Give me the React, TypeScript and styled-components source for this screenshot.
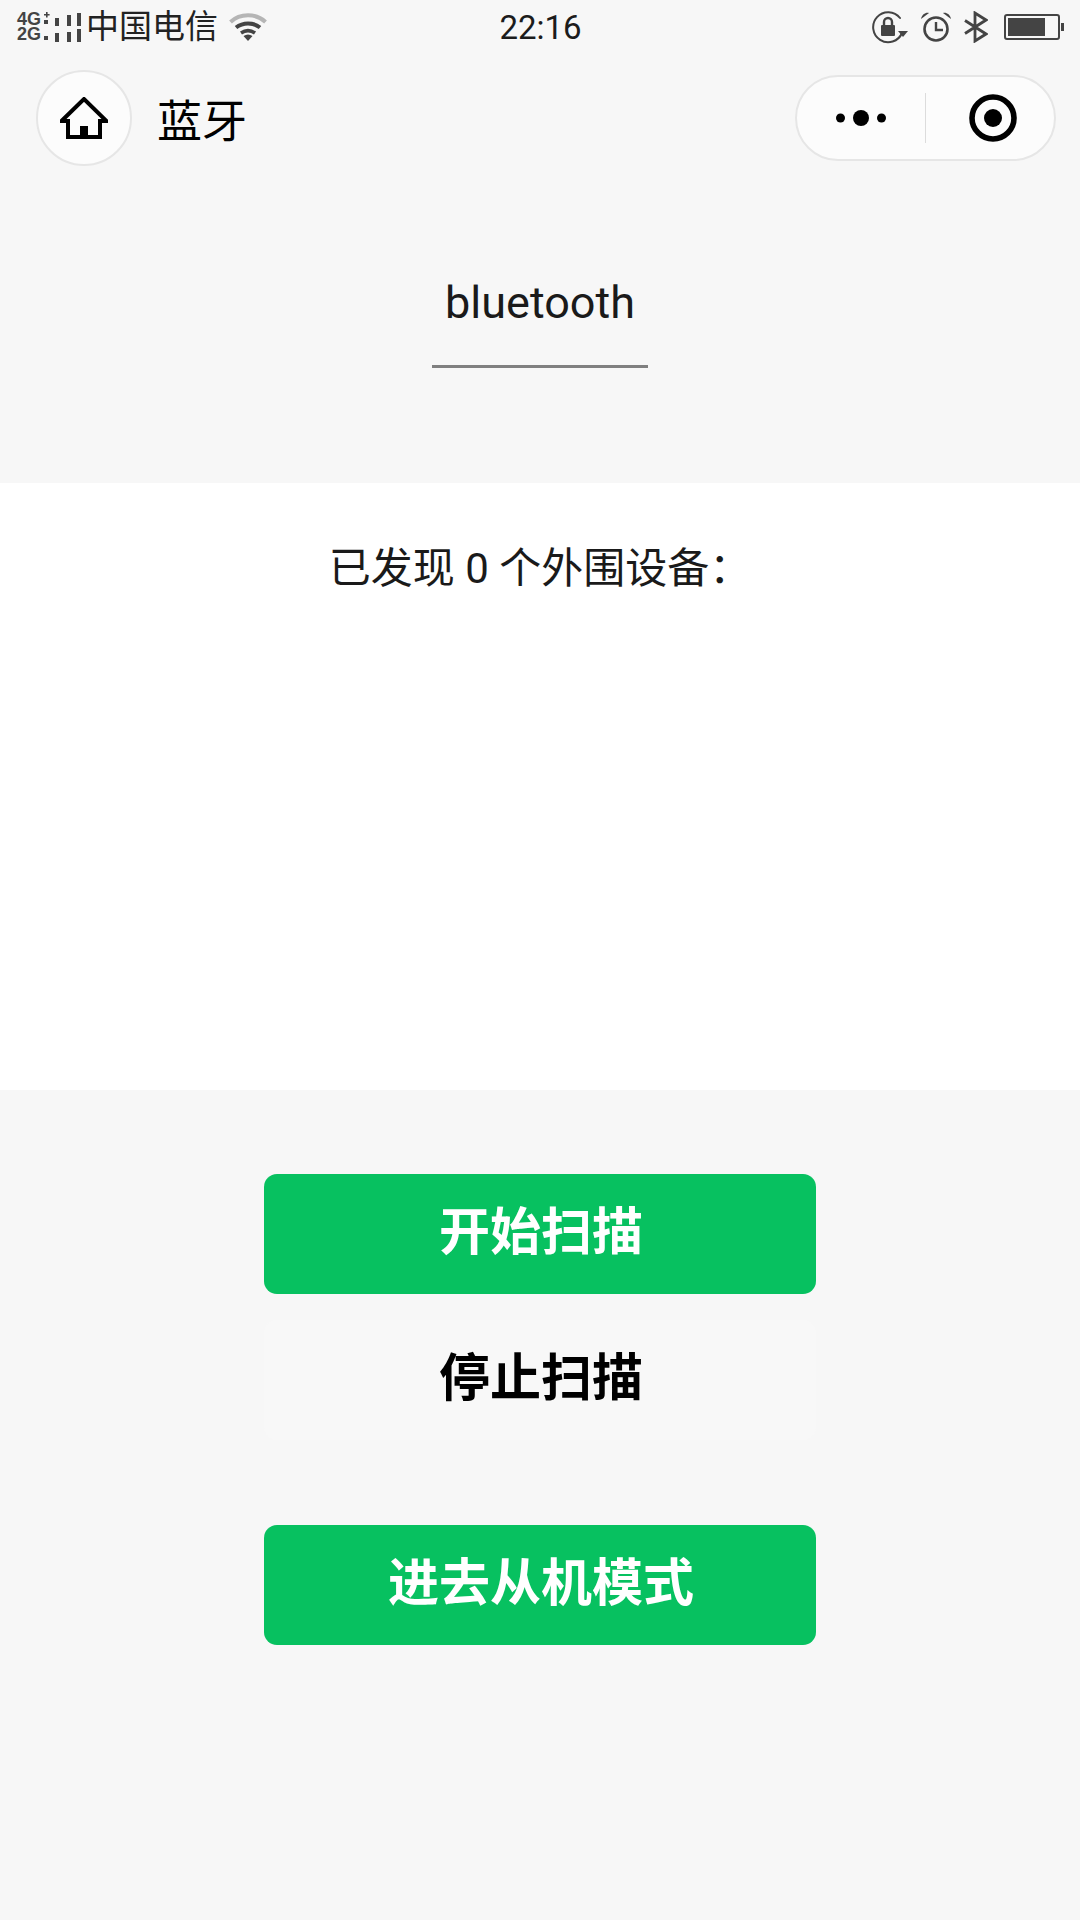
import React from 'react';
import styled, { createGlobalStyle } from 'styled-components';

const GlobalStyle = createGlobalStyle`
  html, body {
    margin: 0;
    padding: 0;
    background: #f7f7f7;
  }
  * {
    box-sizing: border-box;
  }
`;

const FONT = `Roboto, "Noto Sans CJK SC", sans-serif`;

const Page = styled.div`
  width: 1080px;
  height: 1920px;
  display: flex;
  flex-direction: column;
  background: #f7f7f7;
  color: #1a1a1a;
  font-family: ${FONT};
  overflow: hidden;
`;

const StatusBar = styled.div`
  height: 54px;
  padding: 0 16px 0 17px;
  display: grid;
  grid-template-columns: 1fr auto 1fr;
  align-items: center;
  color: #333;
`;

const StatusLeft = styled.div`
  display: flex;
  align-items: center;
`;

const StatusRight = styled.div`
  display: flex;
  align-items: center;
  justify-content: flex-end;
`;

const Space = styled.span<{ $w: number }>`
  width: ${(p) => p.$w}px;
  flex: none;
`;

const NetLabel = styled.div`
  font: 700 18px/15px "Liberation Sans", sans-serif;
  width: 27px;
  color: #444;
`;

const Carrier = styled.span`
  font-size: 33px;
  line-height: 40px;
  color: #222;
`;

const Clock = styled.span`
  font-size: 33px;
  color: #1c1c1c;
`;

const NavBar = styled.div`
  height: 96px;
  margin-top: 16px;
  padding: 0 24px 0 36px;
  display: flex;
  align-items: center;
`;

const HomeButton = styled.div`
  width: 96px;
  height: 96px;
  border-radius: 50%;
  border: 2px solid #e6e6e6;
  background: #fcfcfc;
  display: flex;
  align-items: center;
  justify-content: center;
`;

const NavTitle = styled.span`
  margin-left: 25px;
  font-size: 45px;
  color: #000;
  flex: 1;
`;

const Capsule = styled.div`
  width: 261px;
  height: 86px;
  border-radius: 43px;
  border: 2px solid #e6e6e6;
  background: #fcfcfc;
  display: flex;
  align-items: center;
`;

const CapsulePart = styled.div<{ $inset?: number }>`
  width: 128px;
  flex: none;
  height: 100%;
  padding-left: ${(p) => p.$inset || 0}px;
  display: flex;
  align-items: center;
  justify-content: center;
`;

const CapsuleDivider = styled.div`
  width: 1px;
  height: 50px;
  background: #dcdcdc;
`;

const Header = styled.div`
  height: 317px;
  display: flex;
  flex-direction: column;
  align-items: center;
  padding-top: 101px;
`;

const Title = styled.div`
  font-size: 45px;
  line-height: 72px;
  color: #1a1a1a;
`;

const TitleLine = styled.div`
  width: 216px;
  height: 3px;
  margin-top: 26px;
  background: #808080;
`;

const DeviceSection = styled.div`
  height: 607px;
  background: #fff;
  padding-top: 58px;
  text-align: center;
  font-size: 42px;
  line-height: 56px;
  color: #1a1a1a;
`;

const Actions = styled.div`
  display: flex;
  flex-direction: column;
  align-items: center;
  padding-top: 84px;
`;

const ActionButton = styled.div<{ $primary?: boolean; $gap?: number }>`
  width: 552px;
  height: 120px;
  margin-top: ${(p) => p.$gap || 0}px;
  border-radius: 13px;
  padding: 0 0 13px 2px;
  background: ${(p) => (p.$primary ? '#07c160' : '#f8f8f8')};
  color: ${(p) => (p.$primary ? '#fff' : '#000')};
  font-size: 51px;
  font-weight: 700;
  display: flex;
  align-items: center;
  justify-content: center;
`;

const SignalIcon = () => (
  <svg width="38" height="32" viewBox="0 0 38 32" fill="#444">
    <path d="M2 1 h1.6 v2 h2 v1.6 h-2 v2 h-1.6 v-2 h-2 v-1.6 h2 Z" />
    <rect x="0" y="9" width="4" height="4" />
    <rect x="0" y="25" width="4" height="4" />
    <rect x="11" y="7" width="4" height="8" />
    <rect x="11" y="22" width="4" height="9" />
    <rect x="23" y="4" width="4" height="11" />
    <rect x="23" y="21" width="4" height="10" />
    <rect x="33" y="2" width="4" height="13" />
    <rect x="33" y="18" width="4" height="13" />
  </svg>
);

const WifiIcon = () => (
  <svg width="38" height="28" viewBox="0 0 38 28" fill="none">
    <path d="M1.5 9 C11 0 27 0 36.5 9" stroke="#b5b5b5" strokeWidth="4" />
    <path d="M7 14.5 C14 9 24 9 31 14.5" stroke="#444" strokeWidth="4" />
    <path d="M12 20 C16.5 17 21.5 17 26 20" stroke="#444" strokeWidth="3.6" />
    <path d="M14.5 23 L19 28 L23.5 23 C20.5 21 17.5 21 14.5 23 Z" fill="#444" />
  </svg>
);

const LockRotateIcon = () => (
  <svg width="36" height="33" viewBox="0 0 36 33" fill="none">
    <path
      d="M30 22 A15 15 0 1 1 28 7"
      stroke="#444"
      strokeWidth="2"
      strokeLinecap="round"
    />
    <path d="M26 20 L36 20 L31 26 Z" fill="#444" />
    <rect x="9" y="14" width="14" height="11" rx="1" fill="#444" />
    <path d="M12 14 V11 A4 4 0 0 1 20 11 V14" stroke="#444" strokeWidth="2.4" />
  </svg>
);

const AlarmIcon = () => (
  <svg width="32" height="30" viewBox="0 0 32 30" fill="none">
    <circle cx="16" cy="17" r="11.5" stroke="#444" strokeWidth="2.6" />
    <path d="M16 10 V18 H23" stroke="#444" strokeWidth="2.4" />
    <path d="M1 7 C2 2 6 0 9 1 Z" fill="#444" />
    <path d="M31 7 C30 2 26 0 23 1 Z" fill="#444" />
  </svg>
);

const BluetoothIcon = () => (
  <svg width="24" height="32" viewBox="0 0 24 32" fill="none">
    <path
      d="M1 9.5 L22 23 L11 30 V2 L22 9 L1 22.5"
      stroke="#444"
      strokeWidth="2.8"
    />
  </svg>
);

const BatteryIcon = () => (
  <svg width="60" height="28" viewBox="0 0 60 28" fill="none">
    <rect x="1" y="2" width="54" height="24" rx="2" stroke="#444" strokeWidth="2" />
    <rect x="4" y="5" width="37" height="18" fill="#444" />
    <rect x="57" y="10" width="3" height="8" fill="#444" />
  </svg>
);

const HomeIcon = () => (
  <svg width="48" height="42" viewBox="0 0 48 42" fill="none">
    <path
      d="M1.5 24 L24 2 L46.5 24 H40 V40 H8 V24 Z"
      stroke="#000"
      strokeWidth="4"
      strokeLinejoin="miter"
    />
    <rect x="20" y="29" width="8" height="11" fill="#000" />
  </svg>
);

const DotsIcon = () => (
  <svg width="50" height="18" viewBox="0 0 50 18" fill="#000">
    <circle cx="4.5" cy="9" r="4.5" />
    <circle cx="25" cy="9" r="8" />
    <circle cx="45.5" cy="9" r="4.5" />
  </svg>
);

const RecordIcon = () => (
  <svg width="48" height="48" viewBox="0 0 48 48" fill="none">
    <circle cx="24" cy="24" r="21" stroke="#000" strokeWidth="5.6" />
    <circle cx="24" cy="24" r="9" fill="#000" />
  </svg>
);

const App: React.FC = () => {
  return (
    <Page>
      <GlobalStyle />
      <StatusBar>
        <StatusLeft>
          <NetLabel>
            4G
            <br />
            2G
          </NetLabel>
          <SignalIcon />
          <Space $w={4} />
          <Carrier>中国电信</Carrier>
          <Space $w={11} />
          <WifiIcon />
        </StatusLeft>
        <Clock>22:16</Clock>
        <StatusRight>
          <LockRotateIcon />
          <Space $w={12} />
          <AlarmIcon />
          <Space $w={12} />
          <BluetoothIcon />
          <Space $w={16} />
          <BatteryIcon />
        </StatusRight>
      </StatusBar>
      <NavBar>
        <HomeButton>
          <HomeIcon />
        </HomeButton>
        <NavTitle>蓝牙</NavTitle>
        <Capsule>
          <CapsulePart>
            <DotsIcon />
          </CapsulePart>
          <CapsuleDivider />
          <CapsulePart $inset={6}>
            <RecordIcon />
          </CapsulePart>
        </Capsule>
      </NavBar>
      <Header>
        <Title>bluetooth</Title>
        <TitleLine />
      </Header>
      <DeviceSection>已发现 0 个外围设备：</DeviceSection>
      <Actions>
        <ActionButton $primary>开始扫描</ActionButton>
        <ActionButton $gap={26}>停止扫描</ActionButton>
        <ActionButton $primary $gap={85}>
          进去从机模式
        </ActionButton>
      </Actions>
    </Page>
  );
};

export default App;
